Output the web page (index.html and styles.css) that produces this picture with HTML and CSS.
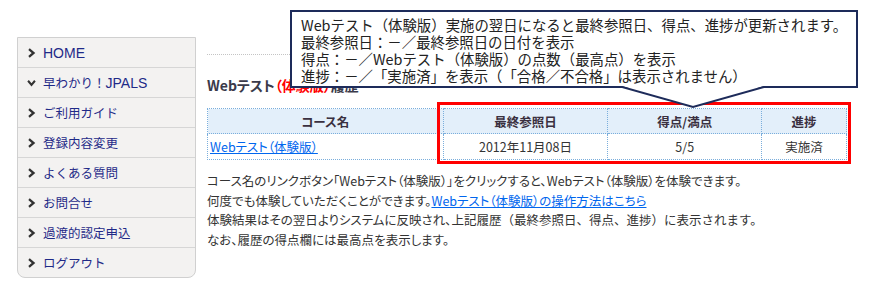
FILE: index.html
```html
<!DOCTYPE html>
<html lang="ja">
<head>
    <meta charset="UTF-8">
    <title>Webテスト（体験版）履歴</title>
    <link rel="stylesheet" href="styles.css">
</head>
<body>
    <div class="page">
        <!-- サイドメニュー -->
        <ul class="side-menu">
            <li class="menu-item"><svg class="chev" viewBox="0 0 8 10"><polyline points="1.5,1.2 6,5 1.5,8.8"/></svg><span class="menu-latin">HOME</span></li>
            <li class="menu-item"><svg class="chev" viewBox="0 0 10 8"><polyline points="1.2,1.5 5,6 8.8,1.5"/></svg>早わかり！<span class="menu-latin">JPALS</span></li>
            <li class="menu-item"><svg class="chev" viewBox="0 0 8 10"><polyline points="1.5,1.2 6,5 1.5,8.8"/></svg>ご利用ガイド</li>
            <li class="menu-item"><svg class="chev" viewBox="0 0 8 10"><polyline points="1.5,1.2 6,5 1.5,8.8"/></svg>登録内容変更</li>
            <li class="menu-item"><svg class="chev" viewBox="0 0 8 10"><polyline points="1.5,1.2 6,5 1.5,8.8"/></svg>よくある質問</li>
            <li class="menu-item"><svg class="chev" viewBox="0 0 8 10"><polyline points="1.5,1.2 6,5 1.5,8.8"/></svg>お問合せ</li>
            <li class="menu-item"><svg class="chev" viewBox="0 0 8 10"><polyline points="1.5,1.2 6,5 1.5,8.8"/></svg>過渡的認定申込</li>
            <li class="menu-item"><svg class="chev" viewBox="0 0 8 10"><polyline points="1.5,1.2 6,5 1.5,8.8"/></svg>ログアウト</li>
        </ul>

        <!-- 本文 -->
        <main class="main">
            <h2 class="title">Webテスト<span class="title-red">（体験版）</span>履歴</h2>

            <div class="table-wrap">
                <table class="history-table">
                    <thead>
                        <tr>
                            <th class="col-name">コース名</th>
                            <th class="col-date">最終参照日</th>
                            <th class="col-score">得点/満点</th>
                            <th class="col-status">進捗</th>
                        </tr>
                    </thead>
                    <tbody>
                        <tr>
                            <td class="cell-left"><a href="#" class="link">Webテスト（体験版）</a></td>
                            <td>2012年11月08日</td>
                            <td>5/5</td>
                            <td>実施済</td>
                        </tr>
                    </tbody>
                </table>
                <div class="red-frame"></div>
            </div>

            <p class="note">
                コース名のリンクボタン「Webテスト（体験版）」をクリックすると、Webテスト（体験版）を体験できます。<br>
                何度でも体験していただくことができます。<a href="#" class="link">Webテスト（体験版）の操作方法はこちら</a><br>
                体験結果はその翌日よりシステムに反映され、<span class="wide">上記履歴（最終参照日、得点、進捗）に表示されます。</span><br>
                なお、履歴の得点欄には最高点を表示します。
            </p>
        </main>

        <!-- 吹き出し -->
        <div class="callout">
            Webテスト（体験版）実施の翌日になると最終参照日、得点、進捗が更新されます。<br>
            最終参照日：－／最終参照日の日付を表示<br>
            得点：－／Webテスト（体験版）の点数（最高点）を表示<br>
            進捗：－／「実施済」を表示（「合格／不合格」は表示されません）
        </div>
        <svg class="callout-tail" viewBox="0 0 143 23">
            <polygon points="0,0 71,21 142,0" fill="#fff"/>
            <polyline points="0,1 71,21 142,1" fill="none" stroke="#1d2b5a" stroke-width="2"/>
        </svg>
    </div>
</body>
</html>
```

FILE: styles.css
```css
* {
    margin: 0;
    padding: 0;
    box-sizing: border-box;
}

body {
    font-family: "Noto Sans CJK JP", sans-serif;
    background: #ffffff;
    color: #333333;
    text-spacing-trim: space-all;
}

.page {
    position: relative;
    display: flex;
    align-items: flex-start;
    padding-left: 17px;
    width: 887px;
    height: 287px;
    overflow: hidden;
}

/* サイドメニュー */
.side-menu {
    list-style: none;
    width: 179px;
    margin-top: 37px;
    background: #f3f2f1;
    border: 1px solid #d0d0d0;
    border-radius: 0 0 8px 8px;
}

.menu-item {
    display: flex;
    align-items: center;
    height: 30px;
    padding-left: 9px;
    border-top: 1px solid #d6d6d6;
    color: #1f2a88;
    font-size: 12.5px;
    white-space: nowrap;
}

.menu-item:first-child {
    border-top: none;
    height: 29px;
}

.menu-latin {
    font-family: "Liberation Sans", sans-serif;
    font-size: 14px;
}

.chev {
    width: 9px;
    height: 10px;
    margin-right: 7px;
    fill: none;
    stroke: #333;
    stroke-width: 2.3;
}

/* 本文 */
.main {
    margin-left: 11px;
    margin-top: 54px;
    width: 645px;
    border-top: 1px dotted #c4c4c4;
}

.title {
    margin-top: 20px;
    font-size: 14px;
    line-height: 20px;
    font-weight: bold;
    color: #3a3a4a;
    font-feature-settings: "palt";
}

.title-red {
    color: #ff0000;
}

.table-wrap {
    position: relative;
    margin-top: 13px;
}

.history-table {
    width: 640px;
    border-collapse: collapse;
    font-size: 12.5px;
    font-feature-settings: "palt";
}

.history-table th,
.history-table td {
    border: 1px dotted #7aaedc;
    text-align: center;
    font-weight: normal;
}

.history-table th {
    height: 25px;
    background: #e3effa;
    font-weight: bold;
    color: #3a3040;
}

.history-table td {
    height: 26px;
}

.col-name { width: 236px; }
.col-date { width: 165px; }
.col-score { width: 154px; }
.col-status { width: 85px; }

.history-table .cell-left {
    text-align: left;
    padding-left: 2px;
}

.link {
    color: #0066ee;
    text-decoration: underline;
}

.red-frame {
    position: absolute;
    left: 230px;
    top: -6px;
    width: 414px;
    height: 62px;
    border: 3px solid #ff0000;
}

.note {
    margin-top: 11px;
    font-size: 12.5px;
    line-height: 19.5px;
    white-space: nowrap;
    font-feature-settings: "palt";
}

.wide {
    font-feature-settings: normal;
}

/* 吹き出し */
.callout {
    position: absolute;
    left: 290px;
    top: 10px;
    width: 568px;
    height: 78px;
    padding: 4px 0 0 9px;
    background: #ffffff;
    border: 2px solid #1d2b5a;
    font-size: 14.4px;
    line-height: 17px;
    color: #222;
    white-space: nowrap;
}

.callout-tail {
    position: absolute;
    left: 622px;
    top: 86px;
    width: 143px;
    height: 23px;
}
```
